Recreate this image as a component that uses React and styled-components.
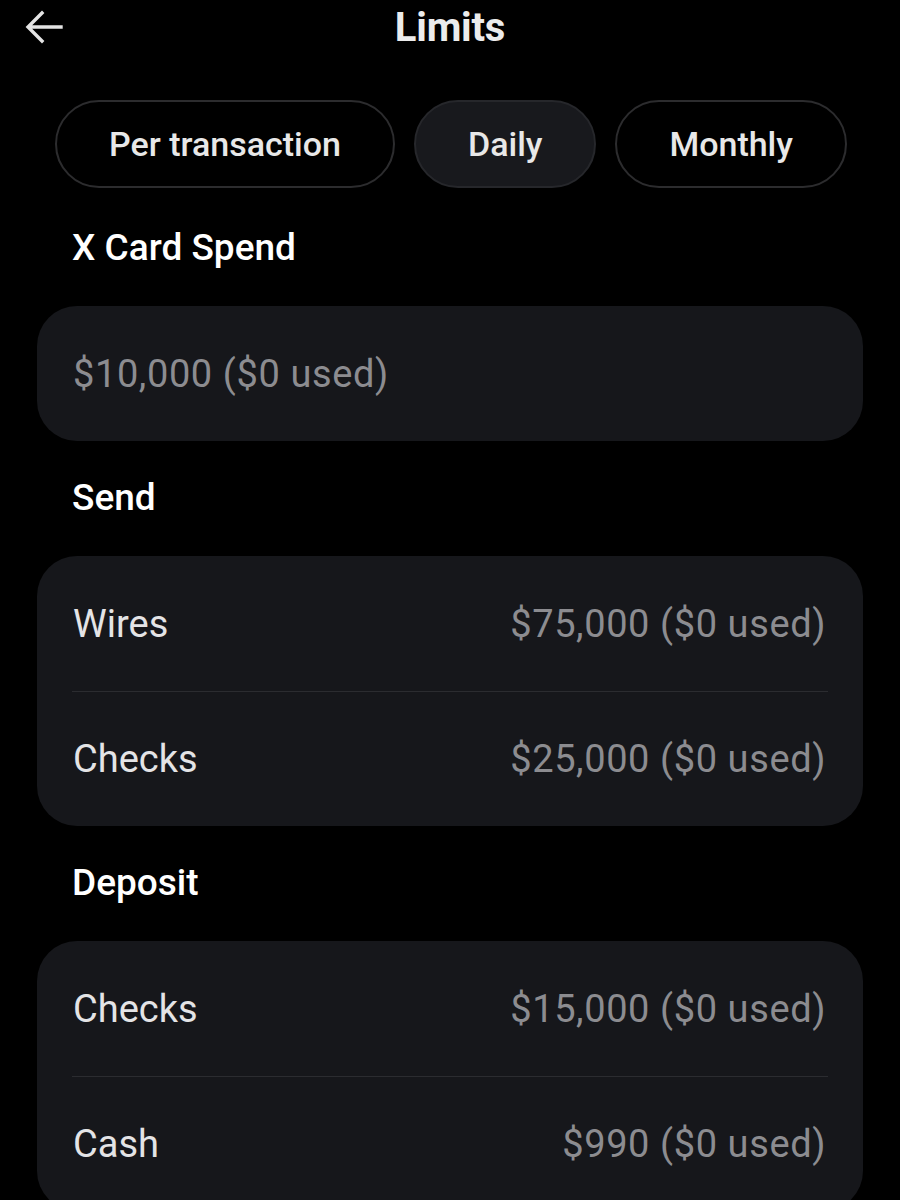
import React, { useState } from "react";
import styled, { createGlobalStyle } from "styled-components";

const GlobalStyle = createGlobalStyle`
  html, body {
    margin: 0;
    padding: 0;
    background: #000;
  }
  body {
    font-family: Roboto, "Noto Sans", "Liberation Sans", sans-serif;
    -webkit-font-smoothing: antialiased;
  }
`;

const Page = styled.div`
  width: 900px;
  min-height: 1200px;
  box-sizing: border-box;
  padding: 0 37px;
  background: #000;
  color: #fff;
  overflow: hidden;
`;

const Header = styled.header`
  position: relative;
  height: 54px;
  display: flex;
  align-items: center;
  justify-content: center;
`;

const BackButton = styled.button`
  position: absolute;
  left: -14px;
  top: 8px;
  width: 42px;
  height: 38px;
  padding: 0;
  border: none;
  background: none;
  color: #e4e4e4;
  display: flex;
  align-items: center;
  justify-content: center;
`;

const Title = styled.h1`
  margin: 0;
  font-size: 40px;
  font-weight: 700;
  color: #ececec;
  letter-spacing: -0.2px;
`;

const Tabs = styled.div`
  display: flex;
  gap: 19px;
  margin-top: 46px;
  padding: 0 18px;
`;

const Tab = styled.button`
  flex: none;
  height: 88px;
  box-sizing: border-box;
  padding: 0 52px;
  border-radius: 44px;
  border: 2px solid ${(p) => (p.$active ? "#26272b" : "#2c2c2e")};
  background: ${(p) => (p.$active ? "#18191d" : "#000")};
  color: #e8e8e8;
  font-family: inherit;
  font-size: 34px;
  font-weight: 500;
  white-space: nowrap;
  cursor: pointer;
`;

const SectionTitle = styled.h2`
  margin: 37px 0 0;
  padding-left: 35px;
  height: 40px;
  line-height: 40px;
  font-size: 37px;
  font-weight: 500;
  color: #fff;
  section:first-of-type > & {
    margin-top: 40px;
  }
`;

const Card = styled.div`
  margin-top: 38px;
  background: #16171b;
  border-radius: 40px;
  overflow: hidden;
`;

const Row = styled.div`
  height: 135px;
  box-sizing: border-box;
  padding: 0 37px 0 36px;
  display: flex;
  align-items: center;
  justify-content: space-between;
  font-size: 38px;
  & + & {
    position: relative;
  }
  & + &::before {
    content: "";
    position: absolute;
    top: 0;
    left: 35px;
    right: 35px;
    height: 1px;
    background: #2b2c30;
  }
`;

const Label = styled.span`
  color: #e4e4e6;
`;

const Value = styled.span`
  color: #8c8c90;
  letter-spacing: 0.6px;
`;

const sections = [
  { title: "X Card Spend", rows: [{ value: "$10,000 ($0 used)" }] },
  {
    title: "Send",
    rows: [
      { label: "Wires", value: "$75,000 ($0 used)" },
      { label: "Checks", value: "$25,000 ($0 used)" },
    ],
  },
  {
    title: "Deposit",
    rows: [
      { label: "Checks", value: "$15,000 ($0 used)" },
      { label: "Cash", value: "$990 ($0 used)" },
    ],
  },
];

export default function App() {
  const [tab, setTab] = useState("Daily");

  return (
    <Page>
      <GlobalStyle />
      <Header>
        <BackButton aria-label="Back">
          <svg width="38" height="34" viewBox="0 0 38 34" fill="none">
            <path
              d="M36 17H4M17 3L3 17l14 14"
              stroke="currentColor"
              strokeWidth="3.4"
              strokeLinecap="square"
            />
          </svg>
        </BackButton>
        <Title>Limits</Title>
      </Header>

      <Tabs>
        {["Per transaction", "Daily", "Monthly"].map((t) => (
          <Tab key={t} $active={t === tab} onClick={() => setTab(t)}>
            {t}
          </Tab>
        ))}
      </Tabs>

      {sections.map((s) => (
        <section key={s.title}>
          <SectionTitle>{s.title}</SectionTitle>
          <Card>
            {s.rows.map((r, i) =>
              r.label ? (
                <Row key={i}>
                  <Label>{r.label}</Label>
                  <Value>{r.value}</Value>
                </Row>
              ) : (
                <Row key={i}>
                  <Value>{r.value}</Value>
                </Row>
              )
            )}
          </Card>
        </section>
      ))}
    </Page>
  );
}
